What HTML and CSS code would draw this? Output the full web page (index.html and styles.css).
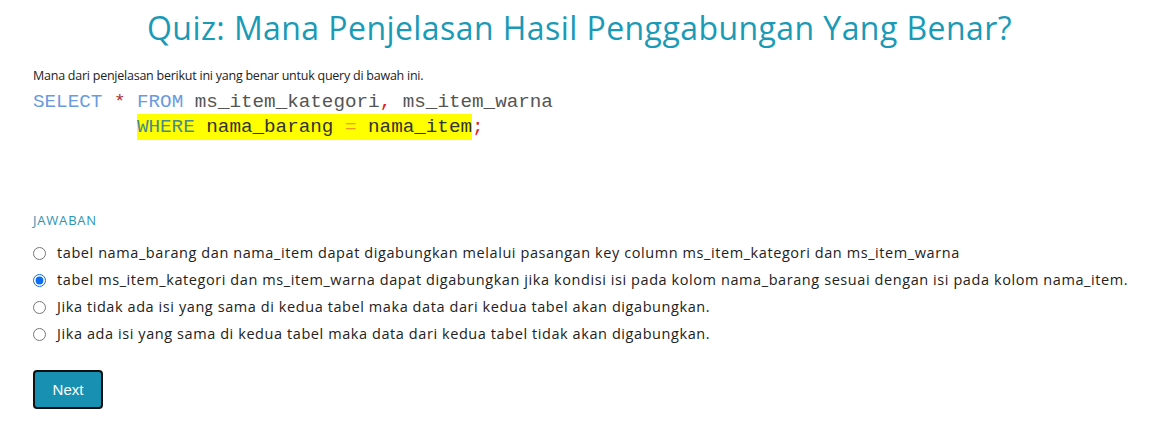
FILE: index.html
```html
<!DOCTYPE html>
<html lang="id">
<head>
<meta charset="utf-8">
<title>Quiz</title>
<link rel="stylesheet" href="styles.css">
</head>
<body>
<main class="quiz">
  <h1 class="quiz-title">Quiz: Mana Penjelasan Hasil Penggabungan Yang Benar?</h1>
  <p class="prompt">Mana dari penjelasan berikut ini yang benar untuk query di bawah ini.</p>
  <pre class="code"><span class="kw">SELECT</span> <span class="star">*</span> <span class="kw">FROM</span> <span class="id">ms_item_kategori</span><span class="punct">,</span> <span class="id">ms_item_warna</span>
         <span class="hl"><span class="kw-hl">WHERE</span> nama_barang <span class="op">=</span> nama_item</span><span class="punct">;</span></pre>
  <section class="answers">
    <div class="answers-label">JAWABAN</div>
    <label class="option"><input type="radio" name="q"><span>tabel nama_barang dan nama_item dapat digabungkan melalui pasangan key column ms_item_kategori dan ms_item_warna</span></label>
    <label class="option"><input type="radio" name="q" checked><span>tabel ms_item_kategori dan ms_item_warna dapat digabungkan jika kondisi isi pada kolom nama_barang sesuai dengan isi pada kolom nama_item.</span></label>
    <label class="option"><input type="radio" name="q"><span>Jika tidak ada isi yang sama di kedua tabel maka data dari kedua tabel akan digabungkan.</span></label>
    <label class="option"><input type="radio" name="q"><span>Jika ada isi yang sama di kedua tabel maka data dari kedua tabel tidak akan digabungkan.</span></label>
  </section>
  <button class="next" type="button">Next</button>
</main>
</body>
</html>
```
FILE: styles.css
```css
* { box-sizing: border-box; }
html, body { margin: 0; background: #fff; }
body {
  font-family: "Open Sans", "Noto Sans", sans-serif;
  color: #222;
}
.quiz {
  padding: 8px 33px 0 33px;
  display: flex;
  flex-direction: column;
  align-items: flex-start;
}
.quiz-title {
  align-self: stretch;
  text-align: center;
  margin: 0;
  font-weight: 400;
  font-size: 32px;
  line-height: 40px;
  color: #1a9ab6;
  letter-spacing: 0.43px;
}
.prompt {
  margin: 19px 0 0 0;
  font-size: 12.5px;
  line-height: 17px;
  color: #222;
  letter-spacing: -0.24px;
}
.code {
  margin: 6px 0 0 0;
  font-family: "Liberation Mono", monospace;
  font-size: 19.25px;
  line-height: 24.5px;
  color: #555;
}
.kw { color: #6a9be0; }
.star { color: #a33; }
.punct { color: #e02020; }
.hl { background: #ffff00; color: #333; padding: 2px 0; }
.kw-hl { color: #4a8a8f; }
.op { color: #f29a1c; }
.answers {
  margin-top: 72px;
  display: flex;
  flex-direction: column;
  gap: 9px;
}
.answers-label {
  font-size: 13px;
  line-height: 18px;
  color: #2b94b4;
  letter-spacing: 0.8px;
  margin-bottom: 6px;
}
.option {
  display: flex;
  align-items: center;
  font-size: 14.5px;
  line-height: 18px;
  color: #222;
  letter-spacing: 0.58px;
  white-space: nowrap;
}
.option input {
  margin: 0 11px 0 0;
  width: 13px;
  height: 13px;
  flex: none;
  accent-color: #0a6cf5;
}
.next {
  margin-top: 27px;
  width: 70px;
  height: 39px;
  background: #1890b1;
  border: 2px solid #111;
  border-radius: 4px;
  color: #fff;
  font-family: "Liberation Sans", Arial, sans-serif;
  font-size: 15px;
  padding: 0;
}
```
